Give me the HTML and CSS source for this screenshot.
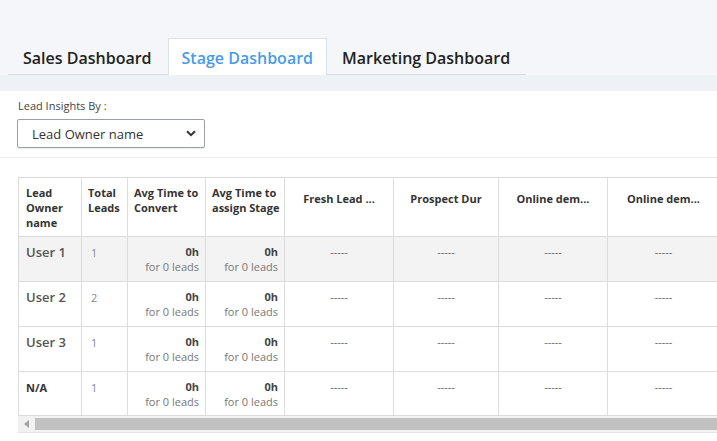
FILE: index.html
```html
<!DOCTYPE html>
<html>
<head>
<meta charset="utf-8">
<link rel="stylesheet" href="styles.css">
</head>
<body>
<header class="top">
  <nav class="tabs">
    <div class="tab">Sales Dashboard</div>
    <div class="tab active">Stage Dashboard</div>
    <div class="tab">Marketing Dashboard</div>
  </nav>
</header>
<div class="band"></div>
<section class="filters">
  <label class="label">Lead Insights By :</label>
  <div class="select">
    <span>Lead Owner name</span>
    <svg width="10" height="7" viewBox="0 0 10 7"><path d="M1 1.2 L5 5.2 L9 1.2" fill="none" stroke="#333" stroke-width="2"/></svg>
  </div>
</section>
<section class="content">
  <div class="grid-wrap">
    <table class="grid">
      <colgroup>
        <col class="c1"><col class="c2"><col class="c3"><col class="c4">
        <col class="c5"><col class="c6"><col class="c7"><col class="c8">
      </colgroup>
      <thead>
        <tr>
          <th class="l">Lead Owner name</th>
          <th class="l">Total Leads</th>
          <th class="l">Avg Time to Convert</th>
          <th class="l tight">Avg Time to assign Stage</th>
          <th class="c">Fresh Lead ...</th>
          <th class="c">Prospect Dur</th>
          <th class="c">Online dem...</th>
          <th class="c">Online dem...</th>
        </tr>
      </thead>
      <tbody>
        <tr class="hl">
          <td class="user">User 1</td><td class="num">1</td>
          <td class="time"><b>0h</b><span>for 0 leads</span></td>
          <td class="time"><b>0h</b><span>for 0 leads</span></td>
          <td class="dash">-----</td><td class="dash">-----</td><td class="dash">-----</td><td class="dash">-----</td>
        </tr>
        <tr>
          <td class="user">User 2</td><td class="num">2</td>
          <td class="time"><b>0h</b><span>for 0 leads</span></td>
          <td class="time"><b>0h</b><span>for 0 leads</span></td>
          <td class="dash">-----</td><td class="dash">-----</td><td class="dash">-----</td><td class="dash">-----</td>
        </tr>
        <tr>
          <td class="user">User 3</td><td class="num">1</td>
          <td class="time"><b>0h</b><span>for 0 leads</span></td>
          <td class="time"><b>0h</b><span>for 0 leads</span></td>
          <td class="dash">-----</td><td class="dash">-----</td><td class="dash">-----</td><td class="dash">-----</td>
        </tr>
        <tr class="last">
          <td class="na">N/A</td><td class="num">1</td>
          <td class="time"><b>0h</b><span>for 0 leads</span></td>
          <td class="time"><b>0h</b><span>for 0 leads</span></td>
          <td class="dash">-----</td><td class="dash">-----</td><td class="dash">-----</td><td class="dash">-----</td>
        </tr>
      </tbody>
    </table>
  </div>
  <div class="hscroll">
    <div class="arrow"><svg width="6" height="8" viewBox="0 0 6 8"><path d="M5 0 L0 4 L5 8 Z" fill="#a3a3a3"/></svg></div>
    <div class="thumb"></div>
  </div>
</section>
</body>
</html>
```

FILE: styles.css
```css
* { box-sizing: border-box; }
html, body { margin: 0; padding: 0; background: #fff; }
body { font-family: "Open Sans", "Noto Sans", sans-serif; color: #333; width: 717px; height: 441px; overflow: hidden; }

.top { background: #f4f6f9; padding: 38px 0 0 8px; }
.tabs { display: inline-flex; border-bottom: 1px solid #d9dde3; }
.tab { height: 37px; padding: 8px 15px 0 14px; font-size: 16px; font-weight: 600; color: #222; border: 1px solid transparent; border-bottom: none; margin-bottom: -1px; letter-spacing: 0; }
.tab.active { background: #fff; color: #4a9be6; border-color: #dde2e8; padding: 8px 13px 0 13px; }

.band { height: 16px; background: #eef1f5; }

.filters { padding: 7px 0 9px 17px; border-bottom: 1px solid #eceef2; }
.label { display: block; font-size: 11px; color: #444; padding-left: 1px; line-height: 15px; margin-bottom: 6px; }
.select { width: 188px; height: 29px; border: 1px solid #9aa0a6; border-radius: 2px; display: flex; align-items: center; justify-content: space-between; padding: 0 8px 0 14px; font-size: 13px; color: #333; box-shadow: 0 1px 1px rgba(0,0,0,0.08); }

.content { padding: 19px 0 0 18px; }
.grid-wrap { overflow: hidden; width: 699px; }
.grid { border-collapse: collapse; table-layout: fixed; width: 701px; font-size: 11px; }
.c1 { width: 63px; } .c2 { width: 46px; } .c3 { width: 78px; } .c4 { width: 79px; }
.c5 { width: 109px; } .c6 { width: 105px; } .c7 { width: 109px; } .c8 { width: 112px; }
.grid th, .grid td { border: 1px solid #dcdcdc; vertical-align: top; }
.grid th { height: 59px; padding: 7px 5px 0 6px; font-weight: 700; color: #333; line-height: 15px; }
.grid th.l { text-align: left; }
.grid th.tight { padding-right: 0; }
.grid th.c { text-align: center; white-space: nowrap; padding: 13px 4px 0 4px; }
.grid th:first-child { padding-left: 7px; }
.grid td { height: 45px; padding: 7px 7px 0 7px; line-height: 15px; }
.grid tr.last td { height: 44px; }
.grid tr.hl td { background: #f3f3f3; }
.grid td.user { font-size: 13px; font-weight: 600; color: #555; padding-top: 8px; }
.grid td.na { font-size: 11px; font-weight: 700; color: #333; padding-top: 8px; }
.grid td.num { color: #888; padding-left: 9px; padding-top: 8px; }
.grid td.time { text-align: right; padding-right: 6px; }
.grid td.time b { display: block; color: #444; font-weight: 700; }
.grid td.time span { display: block; color: #777; }
.grid td.dash { text-align: center; color: #666; font-size: 11px; padding-top: 7px; }

.hscroll { display: flex; height: 17px; width: 699px; background: #f1f1f1; align-items: center; border-bottom: 1px solid #e4e4e4; }
.arrow { width: 17px; height: 17px; display: flex; align-items: center; justify-content: center; }
.thumb { flex: 1; height: 12px; background: #c1c1c1; }
```
